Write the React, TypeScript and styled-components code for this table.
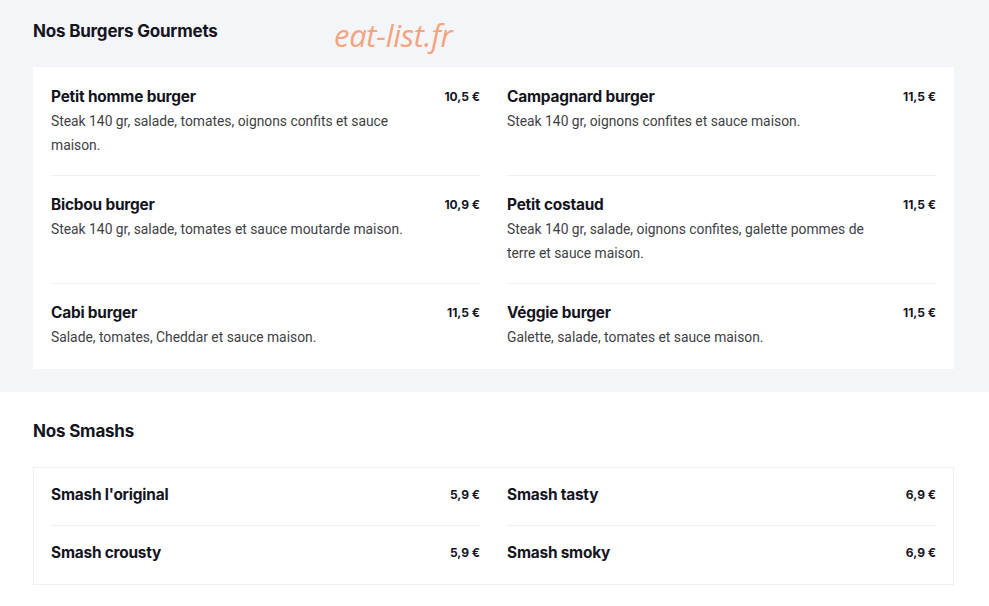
import React from "react";
import styled, { createGlobalStyle } from "styled-components";

const Global = createGlobalStyle`
  html, body { margin: 0; padding: 0; background: #ffffff; }
  body { font-family: Roboto, "Liberation Sans", sans-serif; }
`;

const Page = styled.div`
  position: relative;
  width: 989px;
  height: 606px;
  overflow: hidden;
`;

const Section = styled.section<{ $tone: "gray" | "white"; $top: number; $bottom: number }>`
  background: ${(p) => (p.$tone === "gray" ? "#f4f5f9" : "#ffffff")};
  padding: ${(p) => p.$top}px 35px ${(p) => p.$bottom}px 33px;
`;

const Title = styled.h2`
  margin: 0 0 24px;
  font-family: Inter, "Liberation Sans", sans-serif;
  font-weight: 700;
  font-size: 17px;
  line-height: 24px;
  letter-spacing: -0.2px;
  color: #14141f;
`;

const Card = styled.div<{ $bordered?: boolean }>`
  background: #ffffff;
  border: 1px solid ${(p) => (p.$bordered ? "#eeeff2" : "transparent")};
  padding: 0 17px;
  display: grid;
  grid-template-columns: 1fr 1fr;
  column-gap: 27px;
`;

const Item = styled.div<{ $last?: boolean; $compact?: boolean }>`
  padding: ${(p) => (p.$compact ? "14px 0 19px" : "16px 0 18px")};
  border-bottom: 1px solid ${(p) => (p.$last ? "transparent" : "#eeeff2")};
`;

const Head = styled.div`
  display: flex;
  justify-content: space-between;
  align-items: center;
  height: 24px;
`;

const Name = styled.span`
  font-family: Inter, "Liberation Sans", sans-serif;
  font-weight: 700;
  font-size: 15.4px;
  letter-spacing: -0.2px;
  color: #14141f;
`;

const Price = styled.span`
  font-family: Inter, "Liberation Sans", sans-serif;
  font-weight: 700;
  font-size: 12px;
  color: #14141f;
`;

const Desc = styled.p`
  margin: 1px 0 0;
  font-family: Roboto, "Liberation Sans", sans-serif;
  font-size: 13.85px;
  line-height: 24px;
  color: #3f3f46;
  padding-right: 60px;
`;

const Watermark = styled.div`
  position: absolute;
  left: 334px;
  top: 14px;
  font-family: "Open Sans", sans-serif;
  font-style: italic;
  font-size: 31px;
  color: #f3a57f;
  letter-spacing: -0.3px;
`;

type Entry = { name: string; price: string; desc?: string };

const burgers: Entry[] = [
  { name: "Petit homme burger", price: "10,5 €", desc: "Steak 140 gr, salade, tomates, oignons confits et sauce maison." },
  { name: "Campagnard burger", price: "11,5 €", desc: "Steak 140 gr, oignons confites et sauce maison." },
  { name: "Bicbou burger", price: "10,9 €", desc: "Steak 140 gr, salade, tomates et sauce moutarde maison." },
  { name: "Petit costaud", price: "11,5 €", desc: "Steak 140 gr, salade, oignons confites, galette pommes de terre et sauce maison." },
  { name: "Cabi burger", price: "11,5 €", desc: "Salade, tomates, Cheddar et sauce maison." },
  { name: "Véggie burger", price: "11,5 €", desc: "Galette, salade, tomates et sauce maison." },
];

const smashs: Entry[] = [
  { name: "Smash l'original", price: "5,9 €" },
  { name: "Smash tasty", price: "6,9 €" },
  { name: "Smash crousty", price: "5,9 €" },
  { name: "Smash smoky", price: "6,9 €" },
];

function Menu({ items, compact }: { items: Entry[]; compact?: boolean }) {
  return (
    <>
      {items.map((it, i) => (
        <Item key={it.name} $last={i >= items.length - 2} $compact={compact}>
          <Head>
            <Name>{it.name}</Name>
            <Price>{it.price}</Price>
          </Head>
          {it.desc && <Desc>{it.desc}</Desc>}
        </Item>
      ))}
    </>
  );
}

export default function App() {
  return (
    <Page>
      <Global />
      <Section $tone="gray" $top={19} $bottom={23}>
        <Title>Nos Burgers Gourmets</Title>
        <Card>
          <Menu items={burgers} />
        </Card>
      </Section>
      <Section $tone="white" $top={27} $bottom={20}>
        <Title>Nos Smashs</Title>
        <Card $bordered>
          <Menu items={smashs} compact />
        </Card>
      </Section>
      <Watermark>eat-list.fr</Watermark>
    </Page>
  );
}
